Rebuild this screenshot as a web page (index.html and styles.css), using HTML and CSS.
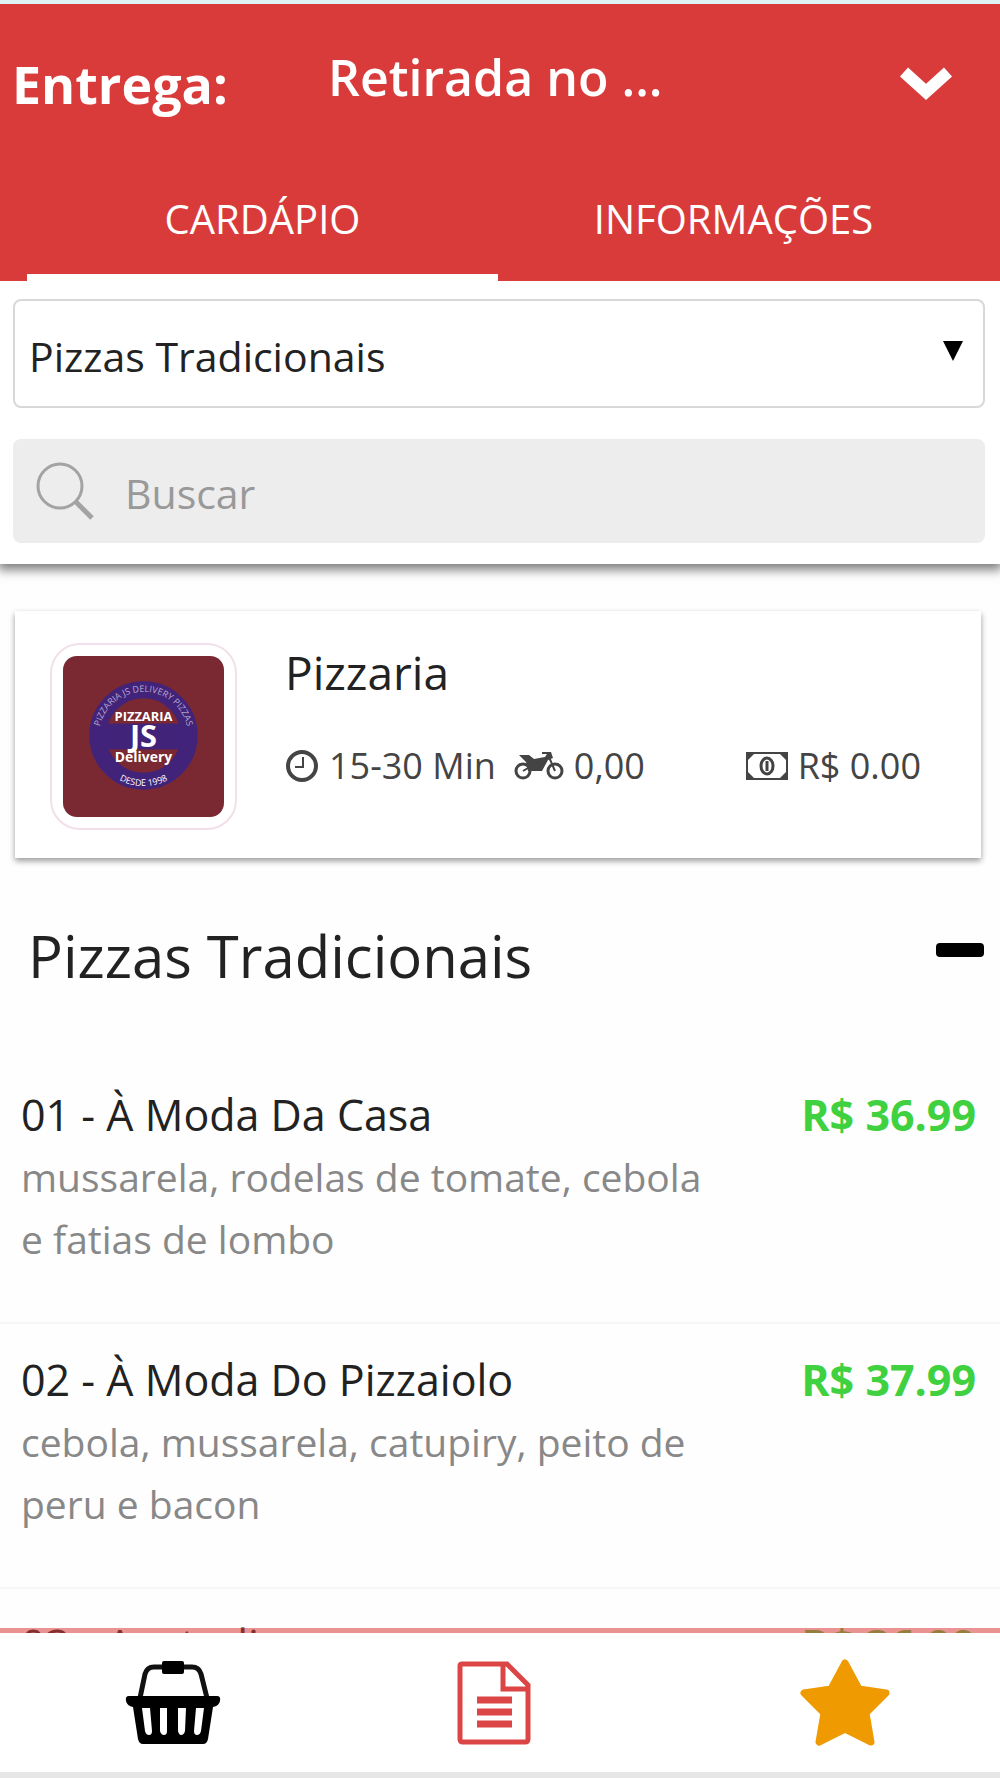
FILE: index.html
```html
<!DOCTYPE html>
<html lang="pt-BR">
<head>
<meta charset="utf-8">
<meta name="viewport" content="width=device-width, initial-scale=1">
<title>Pizzaria</title>
<link rel="stylesheet" href="styles.css">
</head>
<body>
<div class="app">
  <header class="top">
    <div class="delivery">
      <label class="delivery-label" for="delivery">Entrega:</label>
      <div class="delivery-field">
        <select class="delivery-select" id="delivery"><option>Retirada no ...</option></select>
        <svg class="chevron" viewBox="0 0 56 38" aria-hidden="true"><path d="M6 9 28 29 50 9" fill="none" stroke="currentColor" stroke-width="12"/></svg>
      </div>
    </div>
    <nav class="tabs">
      <a class="tab tab-active" href="#cardapio">CARDÁPIO</a>
      <a class="tab" href="#informacoes">INFORMAÇÕES</a>
    </nav>
  </header>

  <section class="filters">
    <div class="category">
      <select class="category-select" aria-label="Categoria"><option>Pizzas Tradicionais</option></select>
      <svg class="caret" viewBox="0 0 20 20" aria-hidden="true"><path d="M0 0H20L10 20Z"/></svg>
    </div>
    <label class="search">
      <svg class="search-icon" viewBox="0 0 60 60" fill="none" stroke="currentColor" aria-hidden="true"><circle cx="25" cy="25" r="22" stroke-width="3"/><path d="M41 41 57 57" stroke-width="5"/></svg>
      <input class="search-input" type="text" placeholder="Buscar" aria-label="Buscar">
    </label>
  </section>

  <main class="content" id="cardapio">
    <section class="store">
      <div class="store-logo">
        <svg viewBox="0 0 162 162" role="img" aria-label="Pizzaria JS Delivery">
          <defs>
            <path id="ring-top" d="M36 81a45 45 0 0 1 90 0"/>
            <path id="ring-bottom" d="M31 81a50 50 0 0 0 100 0"/>
          </defs>
          <rect width="162" height="162" rx="14" fill="#7a2832"/>
          <circle cx="81" cy="80" r="46" fill="none" stroke="#41237a" stroke-width="17"/>
          <rect x="38" y="68" width="86" height="26" fill="#41237a"/>
          <g fill="#fff" text-anchor="middle" font-family="Open Sans, sans-serif" font-weight="700">
            <text x="81" y="65" font-size="13">PIZZARIA</text>
            <text x="81" y="92" font-size="31">JS</text>
            <text x="81" y="107" font-size="14">Delivery</text>
            <g font-size="9" fill="#b9a9d0" font-weight="400">
              <text><textPath href="#ring-top" startOffset="50%">PIZZARIA JS DELIVERY PIZZAS</textPath></text>
              <text fill="#fff"><textPath href="#ring-bottom" startOffset="50%">DESDE 1998</textPath></text>
            </g>
          </g>
        </svg>
      </div>
      <div class="store-info">
        <h1 class="store-name">Pizzaria</h1>
        <div class="store-meta">
          <span class="meta meta-time">
            <svg class="icon-clock" viewBox="0 0 34 34" fill="none" stroke="currentColor" aria-hidden="true"><circle cx="17" cy="17" r="14" stroke-width="4"/><path d="M18 8V18H10" stroke-width="2"/></svg>
            15-30 Min
          </span>
          <span class="meta">
            <svg class="icon-moto" viewBox="0 0 50 30" fill="none" stroke="currentColor" aria-hidden="true"><circle cx="9" cy="20" r="7" stroke-width="3"/><circle cx="41" cy="20" r="7" stroke-width="3"/><path d="M5 4H15L20 8 31 6 33 3H28V1H37L39 7 34 9 28 20H14L12 11Z" fill="currentColor" stroke="none"/><path d="M35 6 41 20M9 20 19 14" stroke-width="2"/></svg>
            0,00
          </span>
          <span class="meta meta-min">
            <svg class="icon-bill" viewBox="0 0 42 28" fill="none" stroke="currentColor" aria-hidden="true"><rect x="1" y="1" width="40" height="26" stroke-width="2"/><path d="M1 1H9L1 9ZM41 1H33L41 9ZM1 27H9L1 19ZM41 27H33L41 19Z" fill="currentColor" stroke="none"/><ellipse cx="21" cy="14" rx="6" ry="8" stroke-width="3"/><path d="M21 9V19" stroke-width="3"/></svg>
            R$ 0.00
          </span>
        </div>
      </div>
    </section>

    <button class="group" type="button">
      <span>Pizzas Tradicionais</span>
      <span class="minus"></span>
    </button>

    <ul class="items">
      <li class="item">
        <div class="item-text">
          <h2 class="item-name">01 - À Moda Da Casa</h2>
          <p class="item-desc">mussarela, rodelas de tomate, cebola e fatias de lombo</p>
        </div>
        <span class="item-price">R$ 36.99</span>
      </li>
      <li class="item">
        <div class="item-text">
          <h2 class="item-name">02 - À Moda Do Pizzaiolo</h2>
          <p class="item-desc">cebola, mussarela, catupiry, peito de peru e bacon</p>
        </div>
        <span class="item-price">R$ 37.99</span>
      </li>
      <li class="item">
        <div class="item-text">
          <h2 class="item-name">03 - Australiana</h2>
        </div>
        <span class="item-price">R$ 36.99</span>
      </li>
    </ul>
  </main>

  <nav class="bottom">
    <a class="bottom-link" href="#cesta" aria-label="Cesta">
      <svg class="icon-basket" viewBox="0 0 96 86" aria-hidden="true">
        <path d="M15 38 20 14Q22 7 29 7H67Q74 7 76 14L82 38" fill="none" stroke="#111" stroke-width="5"/>
        <rect x="37" y="1" width="22" height="13" rx="2" fill="#000"/>
        <path fill="#000" fill-rule="evenodd" d="M4 36H92Q96 36 95 41 94 46 88 47L83 79Q82 84 78 84H18Q14 84 13 79L8 47Q2 46 1 41 0 36 4 36ZM17 48 20 71Q21 75 24 75 27 75 27 71L25 48ZM35 48V71Q36 75 39 75 42 75 42 71V48ZM53 48V71Q54 75 56 75 59 75 60 71L61 48ZM71 48 69 71Q69 75 72 75 75 75 76 71L79 48Z"/>
      </svg>
    </a>
    <a class="bottom-link" href="#pedidos" aria-label="Pedidos">
      <svg class="icon-doc" viewBox="0 0 74 84" fill="none" stroke="currentColor" aria-hidden="true"><path d="M5 3H50L71 24V78Q71 81 68 81H6Q3 81 3 78V5Q3 3 5 3Z" stroke-width="5"/><path d="M46 4V28H71" stroke-width="5"/><path d="M20 39H55M20 51H55M20 63H55" stroke-width="7"/></svg>
    </a>
    <a class="bottom-link bottom-link-last" href="#favoritos" aria-label="Favoritos">
      <svg class="icon-star" viewBox="0 0 92 88" aria-hidden="true"><path d="M46 4 60 30 87 34 67 54 72 83 46 70 20 83 25 54 5 34 32 30Z" fill="#ee9a00" stroke="#ee9a00" stroke-width="7" stroke-linejoin="round"/></svg>
    </a>
  </nav>
</div>
</body>
</html>
```
FILE: styles.css
```css
* { box-sizing: border-box; }

body {
  margin: 0;
  background: #fefefe;
  color: #222;
  font-family: "Open Sans", "Noto Sans", sans-serif;
}

h1, h2, p, ul { margin: 0; padding: 0; }
h1, h2 { font-weight: 400; }
a { text-decoration: none; }
svg { display: block; flex: none; }

select, input, button {
  appearance: none;
  border: 0;
  background: none;
  padding: 0;
  margin: 0;
  font: inherit;
  color: inherit;
}

.app {
  display: flex;
  flex-direction: column;
  height: 100vh;
  overflow: hidden;
}

.top {
  border-top: 4px solid #dff2f4;
  background: #d93b3b;
  color: #fff;
}

.delivery {
  display: flex;
  align-items: flex-start;
  padding: 40px 46px 0 12px;
  height: 152px;
}

.delivery-label {
  flex: none;
  width: 316px;
  padding-top: 8px;
  font-size: 52px;
  font-weight: 700;
  line-height: 64px;
}

.delivery-field {
  flex: 1;
  display: grid;
  grid-template-columns: 1fr 56px;
  align-items: center;
}

.delivery-select {
  grid-area: 1 / 1 / 2 / 3;
  font-size: 50px;
  font-weight: 600;
  line-height: 66px;
}

.chevron {
  grid-area: 1 / 2;
  width: 56px;
  height: 38px;
  margin-top: 10px;
  pointer-events: none;
}

.tabs {
  display: flex;
  padding: 0 31px 0 27px;
}

.tab {
  flex: 1;
  height: 125px;
  padding-top: 36px;
  border-bottom: 7px solid transparent;
  color: #fff;
  font-size: 40px;
  line-height: 54px;
  text-align: center;
}

.tab-active { border-color: #fff; }

.filters {
  position: relative;
  display: grid;
  gap: 31px;
  padding: 18px 15px 21px 13px;
  background: #fff;
  box-shadow: 0 4px 10px 2px rgba(0, 0, 0, .5);
  clip-path: inset(0 0 -30px 0);
}

.category {
  display: grid;
  grid-template-columns: 1fr 20px 22px;
  align-items: center;
}

.category-select {
  grid-area: 1 / 1 / 2 / 4;
  height: 109px;
  padding: 4px 14px 0;
  border: 2px solid #d8d8d8;
  border-radius: 8px;
  font-size: 41px;
}

.caret {
  grid-area: 1 / 2;
  width: 20px;
  height: 20px;
  margin-bottom: 6px;
  pointer-events: none;
}

.search {
  display: flex;
  align-items: center;
  gap: 30px;
  height: 104px;
  padding: 0 22px;
  border-radius: 8px;
  background: #ededed;
  color: #a3a3a3;
}

.search-icon { width: 60px; height: 60px; }

.search-input {
  flex: 1;
  min-width: 0;
  padding-top: 4px;
  font-size: 41px;
}

.search-input::placeholder { color: #999; opacity: 1; }

.content {
  flex: 1;
  min-height: 0;
  overflow: hidden;
  padding-top: 47px;
}

.store {
  display: flex;
  gap: 48px;
  margin: 0 19px 0 15px;
  padding: 32px 60px 28px 35px;
  background: #fff;
  box-shadow: 0 3px 6px rgba(0, 0, 0, .4);
}

.store-logo {
  flex: none;
  width: 187px;
  height: 187px;
  padding: 11px;
  border: 2px solid #f2dfea;
  border-radius: 30px;
}

.store-info { flex: 1; min-width: 0; }

.store-name {
  font-size: 46px;
  line-height: 58px;
}

.store-meta {
  display: flex;
  margin-top: 40px;
  color: #444;
  font-size: 36px;
  line-height: 50px;
  white-space: nowrap;
}

.meta { display: flex; align-items: center; gap: 10px; }
.meta-time { margin-right: 18px; }
.meta-min { margin-left: auto; }

.icon-clock { width: 34px; height: 34px; }
.icon-moto { width: 50px; height: 30px; }
.icon-bill { width: 42px; height: 28px; }

.group {
  display: flex;
  justify-content: space-between;
  align-items: center;
  width: 100%;
  padding: 58px 16px 0 28px;
  font-size: 58px;
  line-height: 80px;
  cursor: pointer;
}

.minus {
  width: 48px;
  height: 14px;
  margin-bottom: 12px;
  border-radius: 4px;
  background: #000;
}

.items { list-style: none; padding-top: 63px; }

.item {
  display: flex;
  justify-content: space-between;
  height: 265px;
  padding: 25px 24px 0 21px;
  border-bottom: 2px solid #f6f6f6;
}

.item-text { width: 708px; }

.item-name {
  font-size: 43px;
  line-height: 62px;
}

.item-desc {
  color: #888;
  font-size: 39px;
  line-height: 62px;
}

.item-price {
  color: #3fd13f;
  font-size: 43px;
  font-weight: 700;
  line-height: 62px;
  white-space: nowrap;
}

.bottom {
  position: fixed;
  right: 0;
  bottom: 0;
  left: 0;
  display: grid;
  grid-template-columns: 346fr 296fr 358fr;
  height: 150px;
  border-top: 5px solid rgba(217, 59, 59, .55);
  border-bottom: 6px solid #e6e6e6;
  background: #fff;
  background-clip: padding-box;
}

.bottom-link {
  display: flex;
  align-items: center;
  justify-content: center;
  color: #db4545;
}

.bottom-link-last { padding-left: 48px; }

.icon-basket { width: 96px; height: 86px; }
.icon-doc { width: 74px; height: 84px; }
.icon-star { width: 92px; height: 88px; }
```
